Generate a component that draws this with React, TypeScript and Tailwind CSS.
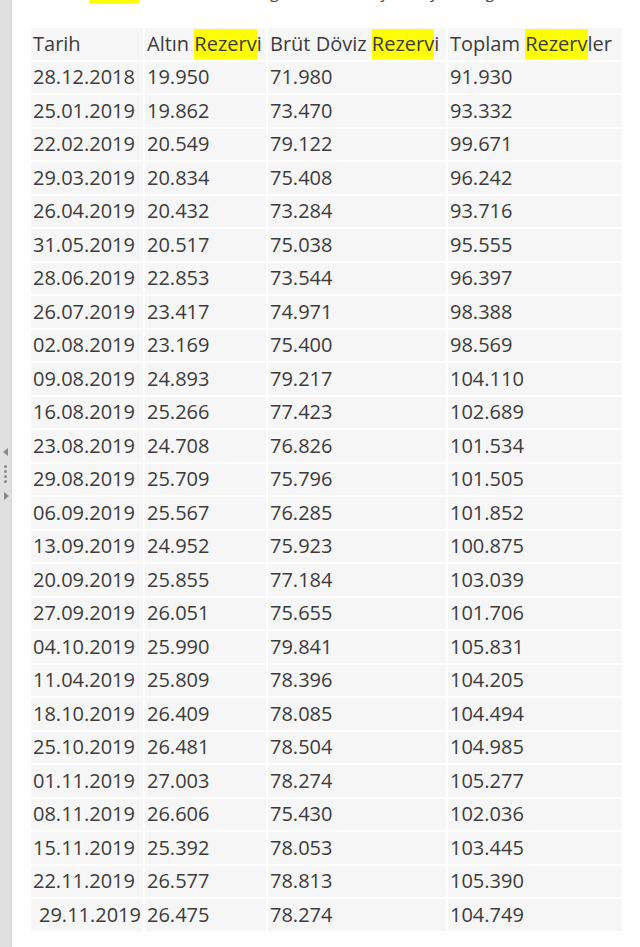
const rows: [string, string, string, string][] = [
  ["28.12.2018", "19.950", "71.980", "91.930"],
  ["25.01.2019", "19.862", "73.470", "93.332"],
  ["22.02.2019", "20.549", "79.122", "99.671"],
  ["29.03.2019", "20.834", "75.408", "96.242"],
  ["26.04.2019", "20.432", "73.284", "93.716"],
  ["31.05.2019", "20.517", "75.038", "95.555"],
  ["28.06.2019", "22.853", "73.544", "96.397"],
  ["26.07.2019", "23.417", "74.971", "98.388"],
  ["02.08.2019", "23.169", "75.400", "98.569"],
  ["09.08.2019", "24.893", "79.217", "104.110"],
  ["16.08.2019", "25.266", "77.423", "102.689"],
  ["23.08.2019", "24.708", "76.826", "101.534"],
  ["29.08.2019", "25.709", "75.796", "101.505"],
  ["06.09.2019", "25.567", "76.285", "101.852"],
  ["13.09.2019", "24.952", "75.923", "100.875"],
  ["20.09.2019", "25.855", "77.184", "103.039"],
  ["27.09.2019", "26.051", "75.655", "101.706"],
  ["04.10.2019", "25.990", "79.841", "105.831"],
  ["11.04.2019", "25.809", "78.396", "104.205"],
  ["18.10.2019", "26.409", "78.085", "104.494"],
  ["25.10.2019", "26.481", "78.504", "104.985"],
  ["01.11.2019", "27.003", "78.274", "105.277"],
  ["08.11.2019", "26.606", "75.430", "102.036"],
  ["15.11.2019", "25.392", "78.053", "103.445"],
  ["22.11.2019", "26.577", "78.813", "105.390"],
  ["29.11.2019", "26.475", "78.274", "104.749"],
]

const widths = ["w-[114px]", "w-[123px]", "w-[180px]", "w-[174px]"]

const Mark = ({ children }: { children: React.ReactNode }) => (
  <span className="inline-block h-[30px] leading-[30px] bg-[#ffff00]">{children}</span>
)

const Cell = ({ col, children, last, extra = "" }: { col: number; children: React.ReactNode; last?: boolean; extra?: string }) => (
  <div
    className={`${widths[col]} h-full flex items-center whitespace-nowrap overflow-hidden bg-[#f6f6f6] border-b-2 border-white ${last ? "" : "border-r-2"} pl-[2px] ${extra}`}
  >
    {children}
  </div>
)

const SideHandle = () => (
  <div className="w-[12px] h-full bg-[#e0e0e0] border-r border-[#d4d4d4] flex flex-col items-center justify-center gap-[5px]">
    <svg width="6" height="8" viewBox="0 0 6 8" aria-hidden="true">
      <path d="M5 0 L0 4 L5 8 Z" fill="#8a8a8a" />
    </svg>
    <div className="flex flex-col gap-[2px] mt-[4px] mb-[4px]">
      {[0, 1, 2, 3].map((i) => (
        <span key={i} className="block w-[3px] h-[3px] rounded-full bg-[#8a8a8a]" />
      ))}
    </div>
    <svg width="6" height="8" viewBox="0 0 6 8" aria-hidden="true">
      <path d="M1 0 L6 4 L1 8 Z" fill="#8a8a8a" />
    </svg>
  </div>
)

export default function App() {
  return (
    <div className="w-[640px] h-[947px] bg-white flex overflow-hidden" style={{ fontFamily: '"Open Sans", "Noto Sans", sans-serif' }}>
      <SideHandle />
      <div className="flex-1 flex flex-col pl-[19px]">
        {/* title line, mostly scrolled out of view */}
        <div className="h-[4px] overflow-hidden">
          <div className="-mt-[19px] text-[16px] leading-[22px] text-[#444] whitespace-nowrap">
            TCMB <span className="ml-[10px] bg-[#ffff00]">Rezerv</span> verilerinin tarihe göre haftalık, aylık ve yıllık dağılımı
          </div>
        </div>

        <div className="mt-[24px] flex flex-col text-[20px] text-[#3c3c3c]">
          <div className="flex h-[33.5px]">
            <Cell col={0}>Tarih</Cell>
            <Cell col={1}>
              Altın&nbsp;<Mark>Rezerv</Mark>i
            </Cell>
            <Cell col={2}>
              Brüt Döviz&nbsp;<Mark>Rezerv</Mark>i
            </Cell>
            <Cell col={3} last>
              Toplam&nbsp;<Mark>Rezerv</Mark>ler
            </Cell>
          </div>
          {rows.map((r, i) => (
            <div key={r[0] + i} className="flex h-[33.5px]">
              <Cell col={0} extra={i === rows.length - 1 ? "pl-[8px]" : ""}>{r[0]}</Cell>
              <Cell col={1}>{r[1]}</Cell>
              <Cell col={2}>{r[2]}</Cell>
              <Cell col={3} last>{r[3]}</Cell>
            </div>
          ))}
        </div>
      </div>
    </div>
  )
}
